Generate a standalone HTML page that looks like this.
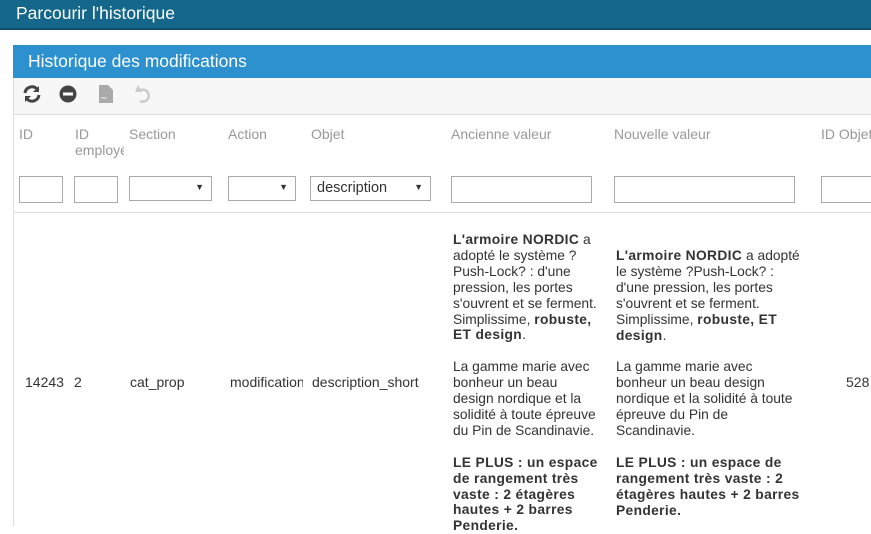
<!DOCTYPE html><html><head><meta charset="utf-8"><style>
body{margin:0;width:871px;height:526px;overflow:hidden;background:#fff;font-family:"Liberation Sans",Arial,sans-serif;position:relative}
.a{position:absolute;white-space:nowrap}
.top{left:0;top:0;width:871px;height:28px;background:#14678a;border-bottom:2px solid #0e4f6b}
.hd{color:#999;font-size:14px}
.in{position:absolute;height:24px;border:1px solid #aaa;box-sizing:border-box;background:#fff}
.sel{font-size:15px;color:#333}
.sel span{position:absolute;right:7px;top:5px;font-size:9px;color:#333}
.txt{font-size:13.8px;line-height:15.9px;color:#333}
b{color:#333;letter-spacing:0.35px}
</style></head><body>
<div class="a top"></div>
<div class="a" style="left:16px;top:3px;color:#fff;font-size:17.5px">Parcourir l'historique</div>
<div class="a" style="left:13px;top:45px;width:858px;height:481px;border-left:1px solid #ddd;background:#fff"></div>
<div class="a" style="left:13px;top:45px;width:858px;height:33px;background:#2d90cf"></div>
<div class="a" style="left:28px;top:51px;color:#fff;font-size:17.5px">Historique des modifications</div>
<div class="a" style="left:14px;top:78px;width:857px;height:36px;background:#f7f7f7;border-bottom:1px solid #ddd"></div>
<svg class="a" style="left:22px;top:84px" width="20" height="20" viewBox="0 0 20 20"><path d="M3 9a7 7 0 0 1 12-4" stroke="#444" stroke-width="3" fill="none"/><path d="M17 11a7 7 0 0 1-12 4" stroke="#444" stroke-width="3" fill="none"/><path d="M17 2v6h-6z" fill="#444"/><path d="M3 18v-6h6z" fill="#444"/></svg>
<svg class="a" style="left:59px;top:85px" width="18" height="18"><circle cx="9" cy="9" r="8.5" fill="#444"/><rect x="4" y="7.5" width="10" height="3" fill="#fff"/></svg>
<svg class="a" style="left:99px;top:85px" width="14" height="18"><path d="M0 0h9l5 5v13H0z" fill="#aaa"/><text x="2" y="14" font-size="4" fill="#fff">csv</text></svg>
<svg class="a" style="left:134px;top:84px" width="18" height="20"><path d="M5 7a6 6 0 1 1 1 10" stroke="#ccc" stroke-width="2.5" fill="none"/><path d="M1 8l3-7 4 7z" fill="#ccc"/></svg>
<div class="a hd" style="left:19px;top:126px">ID</div>
<div class="a hd" style="left:75px;top:126px;line-height:16px;width:49px;overflow:hidden">ID<br>employé</div>
<div class="a hd" style="left:129px;top:126px">Section</div>
<div class="a hd" style="left:228px;top:126px">Action</div>
<div class="a hd" style="left:311px;top:126px">Objet</div>
<div class="a hd" style="left:451px;top:126px">Ancienne valeur</div>
<div class="a hd" style="left:614px;top:126px">Nouvelle valeur</div>
<div class="a hd" style="left:821px;top:126px">ID Objet</div>
<div class="in" style="left:19px;top:176px;width:44px;height:27px"></div>
<div class="in" style="left:74px;top:176px;width:44px;height:27px"></div>
<div class="in sel" style="left:129px;top:176px;width:83px;height:25px"><span>▼</span></div>
<div class="in sel" style="left:228px;top:176px;width:68px;height:25px"><span>▼</span></div>
<div class="in sel" style="left:310px;top:176px;width:121px;height:25px"><div style="position:absolute;left:6px;top:3px;font-size:14.5px">description</div><span>▼</span></div>
<div class="in" style="left:451px;top:176px;width:141px;height:27px"></div>
<div class="in" style="left:614px;top:176px;width:181px;height:27px"></div>
<div class="in" style="left:821px;top:176px;width:60px;height:27px"></div>
<div class="a" style="left:14px;top:212px;width:857px;height:1px;background:#ddd"></div>
<div class="a txt" style="left:25px;top:375px;font-size:14px">14243</div>
<div class="a txt" style="left:74px;top:375px;font-size:14px">2</div>
<div class="a txt" style="left:130px;top:375px;font-size:14px">cat_prop</div>
<div class="a txt" style="left:230px;top:375px;font-size:14px;width:73px;overflow:hidden">modification</div>
<div class="a txt" style="left:312px;top:375px;font-size:14px">description_short</div>
<div class="a txt" style="left:846px;top:375px;font-size:14px">528</div>
<div class="a txt" style="left:453px;top:232px"><b>L'armoire NORDIC</b> a<br>adopté le système ?<br>Push-Lock? : d'une<br>pression, les portes<br>s'ouvrent et se ferment.<br>Simplissime, <b>robuste,</b><br><b>ET design</b>.<br><br>La gamme marie avec<br>bonheur un beau<br>design nordique et la<br>solidité à toute épreuve<br>du Pin de Scandinavie.<br><br><b>LE PLUS : un espace<br>de rangement très<br>vaste : 2 étagères<br>hautes + 2 barres<br>Penderie.</b></div>
<div class="a txt" style="left:616px;top:248px"><b>L'armoire NORDIC</b> a adopté<br>le système ?Push-Lock? :<br>d'une pression, les portes<br>s'ouvrent et se ferment.<br>Simplissime, <b>robuste, ET</b><br><b>design</b>.<br><br>La gamme marie avec<br>bonheur un beau design<br>nordique et la solidité à toute<br>épreuve du Pin de<br>Scandinavie.<br><br><b>LE PLUS : un espace de<br>rangement très vaste : 2<br>étagères hautes + 2 barres<br>Penderie.</b></div>
</body></html>
